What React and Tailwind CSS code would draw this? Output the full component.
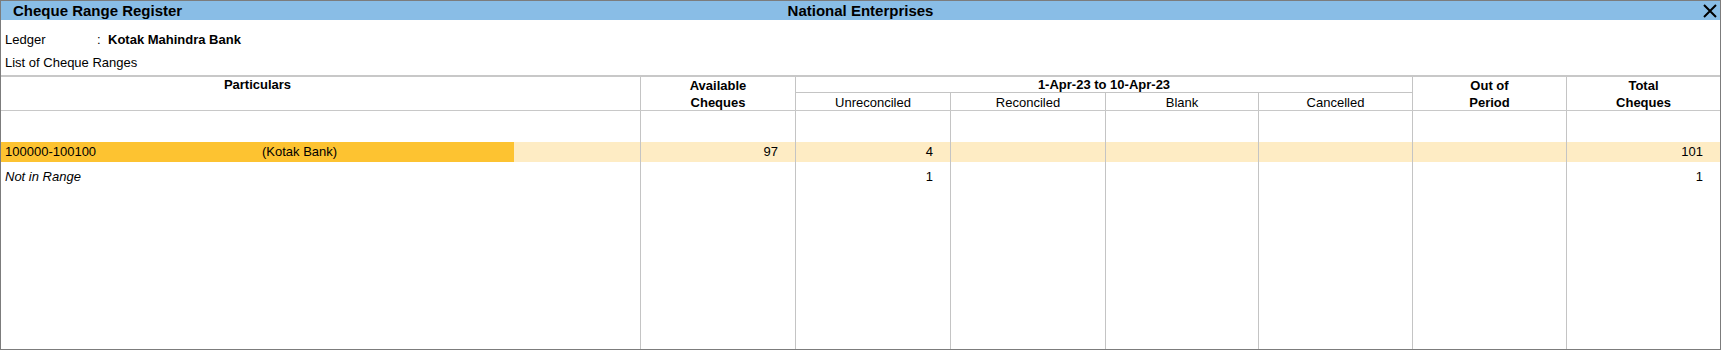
import React from 'react';

const COLS = 'grid grid-cols-[639px_155px_155px_155px_153px_154px_154px_154px]';
const LINE = 'border-l border-[#c4c4c4]';

// one body row: 8 cells, particulars first, then 7 numeric columns
function Row({ h, particulars, values = [], highlight, italic }) {
  return (
    <div className={`${COLS} ${h}`}>
      <div className={`flex ${highlight ? 'bg-[#feecc4]' : ''}`}>
        {highlight ? (
          <div className="w-[513px] bg-[#fdc331] flex items-center pl-[4px]">
            <span className="w-[257px]">{particulars[0]}</span>
            <span>{particulars[1]}</span>
          </div>
        ) : (
          <div className={`flex items-center pl-[4px] ${italic ? 'italic' : ''}`}>
            {particulars && particulars[0]}
          </div>
        )}
      </div>
      {[0, 1, 2, 3, 4, 5, 6].map((i) => (
        <div
          key={i}
          className={`${LINE} flex items-center justify-end pr-[17px] ${highlight ? 'bg-[#feecc4]' : ''}`}
        >
          {values[i] || ''}
        </div>
      ))}
    </div>
  );
}

export default function App() {
  return (
    <div className="w-[1721px] h-[350px] flex flex-col bg-white border border-[#7c7c7c] text-[13px] text-black font-['Liberation_Sans',Arial,sans-serif]">
      {/* title bar */}
      <div className="h-[19px] bg-[#89bde6] flex items-center relative shrink-0">
        <div className="pl-[12px] font-bold text-[15px] leading-[19px]">Cheque Range Register</div>
        <div className="absolute inset-0 flex justify-center items-center font-bold text-[15px] leading-[19px]">
          National Enterprises
        </div>
        <svg className="absolute right-[3px] top-[3px]" width="14" height="14" viewBox="0 0 14 14">
          <path d="M1 1 L13 13 M13 1 L1 13" stroke="#000" strokeWidth="2" />
        </svg>
      </div>

      {/* ledger info */}
      <div className="pt-[11px] pb-[4px] shrink-0">
        <div className="flex h-[17px] items-center pl-[4px]">
          <span className="w-[92px]">Ledger</span>
          <span className="w-[11px]">:</span>
          <span className="font-bold">Kotak Mahindra Bank</span>
        </div>
        <div className="flex h-[17px] items-center pl-[4px] mt-[6px]">List of Cheque Ranges</div>
      </div>

      {/* column headers */}
      <div className={`${COLS} grid-rows-[16px_17px] border-t-2 border-b border-[#c8c8c8] shrink-0 font-bold`}>
        <div className="row-span-2 flex">
          <div className="w-[513px] text-center leading-[16px]">Particulars</div>
        </div>
        <div className={`row-span-2 ${LINE} text-center leading-[17px]`}>
          Available
          <br />
          Cheques
        </div>
        <div className={`col-span-4 ${LINE} border-b text-center leading-[15px]`}>1-Apr-23 to 10-Apr-23</div>
        <div className={`row-span-2 ${LINE} text-center leading-[17px]`}>
          Out of
          <br />
          Period
        </div>
        <div className={`row-span-2 ${LINE} text-center leading-[17px]`}>
          Total
          <br />
          Cheques
        </div>
        {['Unreconciled', 'Reconciled', 'Blank', 'Cancelled'].map((t) => (
          <div key={t} className={`${LINE} font-normal text-center leading-[17px] pt-[1px]`}>
            {t}
          </div>
        ))}
      </div>

      {/* body */}
      <Row h="h-[31px]" />
      <Row
        h="h-[16px]"
        highlight
        particulars={['100000-100100', '(Kotak Bank)']}
        values={['97', '4', '', '', '', '', '101']}
      />
      <Row h="h-[9px]" />
      <Row h="h-[16px]" italic particulars={['Not in Range']} values={['', '1', '', '', '', '', '1']} />
      <div className={`${COLS} flex-1`}>
        <div />
        {[0, 1, 2, 3, 4, 5, 6].map((i) => (
          <div key={i} className={LINE} />
        ))}
      </div>
    </div>
  );
}
